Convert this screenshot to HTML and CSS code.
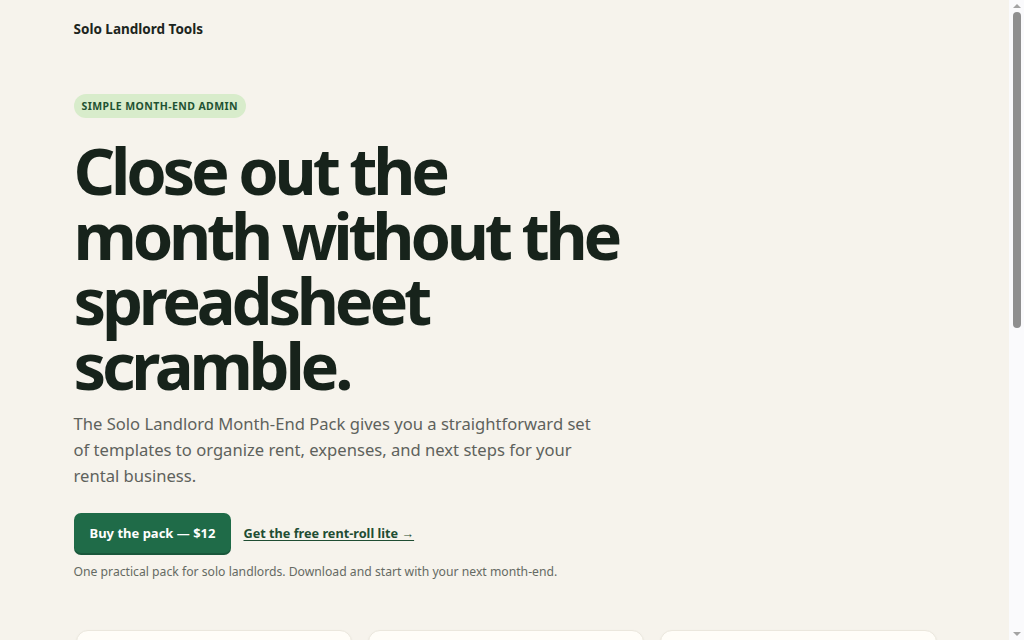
FILE: index.html
```html
<!DOCTYPE html>
<html lang="en">
<head>
<meta charset="utf-8">
<title>Solo Landlord Tools</title>
<link rel="stylesheet" href="styles.css">
</head>
<body>
<div class="page">
  <header class="site-header">
    <span class="brand">Solo Landlord Tools</span>
  </header>
  <main>
    <section class="hero">
      <span class="badge">Simple month-end admin</span>
      <h1 class="title">Close out the month without the spreadsheet scramble.</h1>
      <p class="lead">The Solo Landlord Month-End Pack gives you a straightforward set of templates to organize rent, expenses, and next steps for your rental business.</p>
      <div class="actions">
        <a class="btn" href="#">Buy the pack — $12</a>
        <a class="link" href="#">Get the free rent-roll lite →</a>
      </div>
      <p class="note">One practical pack for solo landlords. Download and start with your next month-end.</p>
    </section>
    <section class="cards">
      <div class="card">
        <h2 class="card-title">Rent roll</h2>
        <p class="card-text">Track every unit, tenant, due date and payment in one clean sheet.</p>
      </div>
      <div class="card">
        <h2 class="card-title">Expense log</h2>
        <p class="card-text">Record repairs, utilities and fees as they happen, ready for tax time.</p>
      </div>
      <div class="card">
        <h2 class="card-title">Month-end checklist</h2>
        <p class="card-text">A short list of next steps so nothing slips into the next month.</p>
      </div>
    </section>
  </main>
</div>
<div class="scrollbar" aria-hidden="true">
  <span class="sb-arrow sb-up"></span>
  <span class="sb-thumb"></span>
  <span class="sb-space"></span>
  <span class="sb-arrow sb-down"></span>
</div>
</body>
</html>
```
FILE: styles.css
```css
html, body {
  margin: 0;
  padding: 0;
}
body {
  background: #f6f3ec;
  color: #17231b;
  font-family: "Noto Sans", "Open Sans", sans-serif;
  padding: 0 14px 0 1px;
}
.page {
  max-width: 864px;
  margin: 0 auto;
  padding: 0 0 80px;
}
.site-header {
  display: flex;
  align-items: center;
  height: 58px;
}
.brand {
  font-size: 13.5px;
  font-weight: 700;
  color: #1c2520;
}
.hero {
  display: flex;
  flex-direction: column;
  align-items: flex-start;
  padding-top: 36px;
}
.badge {
  display: inline-block;
  background: #d8eccb;
  color: #1f5232;
  font-size: 10.5px;
  font-weight: 700;
  text-transform: uppercase;
  letter-spacing: 0.04em;
  line-height: 24px;
  padding: 0 8px;
  border-radius: 12px;
}
.title {
  margin: 20px 0 0;
  max-width: 565px;
  font-size: 65px;
  line-height: 65px;
  font-weight: 700;
  letter-spacing: -0.065em;
  color: #17231b;
}
.lead {
  margin: 13px 0 0;
  max-width: 530px;
  font-size: 16.6px;
  line-height: 26px;
  color: #5e625c;
}
.actions {
  display: flex;
  align-items: center;
  gap: 12px;
  margin-top: 24px;
}
.btn {
  display: inline-flex;
  align-items: center;
  height: 42px;
  padding: 0 16px 3px;
  background: #1f6b48;
  color: #ffffff;
  font-size: 13px;
  font-weight: 700;
  text-decoration: none;
  border-radius: 7px;
  box-shadow: inset 0 -2px 0 rgba(0, 0, 0, 0.18);
  box-sizing: border-box;
}
.link {
  color: #1f4d33;
  font-size: 12.7px;
  font-weight: 700;
  text-decoration: underline;
  text-underline-offset: 2px;
  padding-bottom: 3px;
}
.note {
  margin: 8px 0 0;
  font-size: 12.2px;
  line-height: 18px;
  color: #656a63;
}
.cards {
  display: grid;
  grid-template-columns: repeat(3, 1fr);
  gap: 16px;
  margin-top: 49px;
  padding: 0 1px 0 2px;
}
.card {
  background: #fffdf8;
  border: 1px solid #ebe7dd;
  border-radius: 12px;
  box-shadow: 0 1px 3px rgba(0, 0, 0, 0.04);
  padding: 20px;
}
.card-title {
  margin: 0 0 8px;
  font-size: 16px;
  font-weight: 700;
}
.card-text {
  margin: 0;
  font-size: 14px;
  line-height: 22px;
  color: #5e625c;
}

/* visual of the browser's scrollbar, drawn over the page edge */
.scrollbar {
  position: fixed;
  top: 0;
  right: 0;
  width: 15px;
  height: 100vh;
  background: #fafafc;
  display: flex;
  flex-direction: column;
  align-items: center;
}
.sb-arrow {
  width: 0;
  height: 0;
  border-left: 4px solid transparent;
  border-right: 4px solid transparent;
}
.sb-up {
  margin-top: 4px;
  border-bottom: 4px solid #a3a3a3;
}
.sb-down {
  margin-bottom: 4px;
  border-top: 4px solid #a3a3a3;
}
.sb-thumb {
  margin-top: 4px;
  width: 8px;
  height: 316px;
  border-radius: 4px;
  background: #8f8f8f;
}
.sb-space {
  flex: 1;
}
```
